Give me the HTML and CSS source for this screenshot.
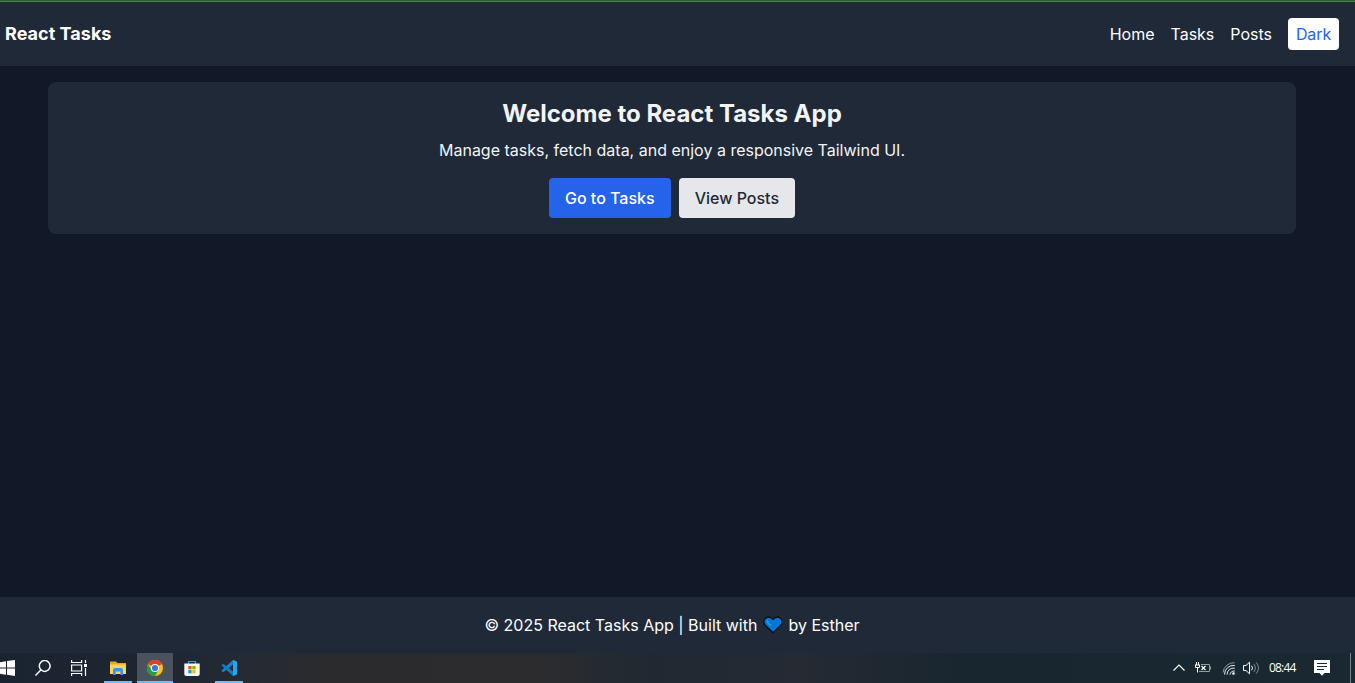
FILE: index.html
```html
<!DOCTYPE html>
<html lang="en">
<head>
<meta charset="utf-8">
<title>React Tasks</title>
<link rel="stylesheet" href="styles.css">
</head>
<body>
<div class="screen">
  <div class="app">
    <header class="header">
      <div class="brand">React Tasks</div>
      <nav class="nav">
        <a>Home</a><a>Tasks</a><a>Posts</a>
        <button class="theme">Dark</button>
      </nav>
    </header>
    <main class="main">
      <section class="card">
        <h1>Welcome to React Tasks App</h1>
        <p>Manage tasks, fetch data, and enjoy a responsive Tailwind UI.</p>
        <div class="actions">
          <button class="btn primary">Go to Tasks</button>
          <button class="btn secondary">View Posts</button>
        </div>
      </section>
    </main>
    <footer class="footer">
      <span>© 2025 React Tasks App | Built with</span>
      <svg class="heart" viewBox="0 0 20 18"><path d="M10 16.800 2.200 9.200C.4 7 .6 4 2.600 2.300 4.800.4 8 .8 10 3.400 12 .8 15.200.4 17.400 2.300 19.400 4 19.600 7 17.800 9.200Z" fill="#0078d7" stroke="#0b1119" stroke-width="1.500" stroke-linejoin="round"/><path d="M4.500 5c.2 1.800 1.500 3.300 3.200 4" fill="none" stroke="#2b93e8" stroke-width="1.800" stroke-linecap="round"/></svg>
      <span>by Esther</span>
    </footer>
  </div>
  <div class="taskbar">
    <div class="pinned">
      <div class="slot"><svg viewBox="0 0 16 16" fill="#fff"><path d="M1 2.200 7 1.300v6.200H1ZM8 1.100 16 0v7.500H8ZM1 8.500h6v6.200l-6-.9ZM8 8.500h8V16l-8-1.200Z"/></svg></div>
      <div class="slot"><svg viewBox="0 0 16 16" fill="none" stroke="#fff" stroke-width="1.500"><circle cx="9.700" cy="6" r="5.400"/><path d="M6 9.800.5 15.500"/></svg></div>
      <div class="slot"><svg viewBox="0 0 16 16" fill="none" stroke="#fff" stroke-width="1.200"><path d="M.6 0v2.500h10V0M.6 16v-2.500h10V16M.6 5h10v6H.6ZM14.500 0v3M14.500 8v8"/><path d="M13 4h3v3h-3Z" fill="#fff" stroke="none"/></svg></div>
      <div class="slot running first"><svg viewBox="0 0 16 16"><path d="M0 1.500h6l1.500 1.500H16v11H0Z" fill="#e9a91f"/><path d="M0 4.500h16v9.500H0Z" fill="#ffd65c"/><path d="M3 15V9.500L4.500 8h7L13 9.500V15h-2.700v-3.500H5.700V15Z" fill="#3995e5"/></svg></div>
      <div class="slot active"><svg viewBox="0 0 16 16"><circle cx="8" cy="8" r="8" fill="#fbc116"/><path d="M8 8 1.070 4a8 8 0 0 1 13.860 0Z" fill="#e33b2e"/><path d="M1.070 4A8 8 0 0 0 8 16l3.500-6L8 8 4.500 10Z" fill="#249a4a"/><circle cx="8" cy="8" r="4.100" fill="#fff"/><circle cx="8" cy="8" r="3.100" fill="#3578e5"/></svg></div>
      <div class="slot"><svg viewBox="0 0 16 16"><path d="M4.500 4V1.500h7V4" fill="none" stroke="#27a8e0" stroke-width="1.200"/><path d="M.3 3.500h15.400V14q0 2-2 2H2.300q-2 0-2-2Z" fill="#f4f6f7"/><path d="M4.300 6h3.300v3.300H4.300Z" fill="#f05125"/><path d="M8.300 6h3.300v3.300H8.300Z" fill="#7eb900"/><path d="M4.300 10h3.300v3.300H4.300Z" fill="#159eda"/><path d="M8.300 10h3.300v3.300H8.300Z" fill="#fdb813"/></svg></div>
      <div class="slot running"><svg viewBox="0 0 16 16"><path d="M12 0 16 1.800v12.400L12 16V4.600L2.200 12.300.3 10.800Z" fill="#1684cf"/><path d="M.3 5.200 2.200 3.700 12 11.400V16L.3 5.200Z" fill="#0b7cc6"/><path d="m12 0 4 1.800v12.400L12 16Z" fill="#2aa5ec"/></svg></div>
    </div>
    <div class="tray">
      <svg class="chevron" viewBox="0 0 12 16" fill="none" stroke="#fff" stroke-width="1.200"><path d="m.5 10.500 5.500-5.500 5.500 5.500"/></svg>
      <svg class="battery" viewBox="0 0 16 16" fill="none" stroke="#fff"><path d="M1.500 2v3M3.500 2v3M0 5h5M.5 5v2.500h4V5M2.500 8v4.500"/><path d="M6 4.500h8.500v7H4M15.500 6.500v3" stroke="#929c9f"/><path d="m6.500 6 4 4M10.500 6l-4 4" stroke-width="1.200"/></svg>
      <svg class="wifi" viewBox="0 0 14 16" fill="none"><path d="M1 12.500A11 11 0 0 1 12.500 2.700" stroke="#8d989d"/><path d="M2.500 14.500A9 9 0 0 1 12.800 5.500M5 14.700A6.500 6.500 0 0 1 12.800 8.200M8 14.700a4 4 0 0 1 4.800-3.700" stroke="#e9eded"/><circle cx="11.500" cy="13.500" r="1.300" fill="#fff"/></svg>
      <svg class="speaker" viewBox="0 0 17 16" fill="none" stroke="#fff"><path d="M.5 5.500H3l3.500-3.300v11.600L3 10.500H.5ZM8.500 5.700q2 2.300 0 4.600"/><path d="M10.800 4q3.200 4 0 8M13.200 2.300q4.600 5.700 0 11.400" stroke="#7b878c"/></svg>
      <time class="clock">08:44</time>
      <svg class="notice" viewBox="0 0 16 16"><path d="M0 0h16v13h-5.500L8 15.800 5.500 13H0Z" fill="#fff"/><path d="M3 3.500h10M3 6.500h10M3 9.500h7" stroke="#192932" stroke-width="1.100"/></svg>
    </div>
  </div>
</div>
</body>
</html>
```
FILE: styles.css
```css
* { box-sizing: border-box; }
body { margin: 0; overflow: hidden; background: #111827; font: 16px/24px Inter, sans-serif; }
h1, p { margin: 0; }
button { border: 0; font: inherit; }
.screen { height: 683px; display: flex; flex-direction: column; border-top: 1px solid #236224; overflow: hidden; }
.app { flex: 1; width: 1366px; margin-left: -11px; display: flex; flex-direction: column; color: #fff; border-top: 1px solid #51805a; }
.header { height: 64px; padding: 0 16px; display: flex; justify-content: space-between; align-items: center; background: #1f2937; }
.brand { font-size: 18px; line-height: 28px; font-weight: 700; letter-spacing: 0.03px; }
.nav { display: flex; align-items: center; gap: 16px; }
.theme { width: 51px; padding: 4px 0; border-radius: 4px; background: #fff; color: #2563eb; letter-spacing: -0.1px; }
.main { flex: 1; padding: 16px 59px; }
.card { width: 1248px; height: 152px; padding: 16px; border-radius: 8px; background: #1f2937; color: #f3f4f6; text-align: center; }
.card h1 { font-size: 24px; line-height: 32px; font-weight: 700; margin-bottom: 8px; }
.card p { margin-bottom: 16px; }
.actions { display: flex; justify-content: center; gap: 8px; }
.btn { padding: 8px 16px; border-radius: 4px; font-weight: 500; }
.primary { background: #2563eb; color: #fff; }
.secondary { background: #e5e7eb; color: #1f2937; }
.footer { height: 56px; display: flex; align-items: center; justify-content: center; background: #1f2937; }
.heart { width: 20px; height: 18px; margin: 0 5px 0 6px; }
.taskbar { height: 30px; display: flex; justify-content: space-between; background: linear-gradient(90deg, #1a2430 0, #1d2530 130px, #252a33 245px, #2b2b2e 330px, #2c2c2e 540px, #202932 650px, #252a33 800px, #18262f 970px, #1a2931 1355px); }
.pinned { display: flex; margin-left: -11px; }
.slot { width: 36px; height: 30px; display: flex; align-items: center; justify-content: center; }
.slot svg { width: 16px; height: 16px; }
.first { margin-left: 3px; }
.first ~ .slot { margin-left: 1px; }
.active { background: #4c525b; box-shadow: inset 0 -2px #76b9ed; }
.running { background: linear-gradient(#76b9ed, #76b9ed) center bottom / 28px 2px no-repeat; }
.tray { display: flex; align-items: center; padding-right: 20px; margin-right: 4px; border-right: 1px solid #7b858a; }
.tray svg { height: 16px; }
.chevron { width: 12px; margin-right: 10px; }
.battery { width: 16px; margin-right: 11px; }
.wifi { width: 14px; margin-right: 7px; }
.speaker { width: 17px; margin-right: 9px; }
.clock { width: 28px; margin-right: 17px; color: #fff; font: 12px/16px "Open Sans", sans-serif; letter-spacing: -0.8px; }
.notice { width: 16px; }
```
